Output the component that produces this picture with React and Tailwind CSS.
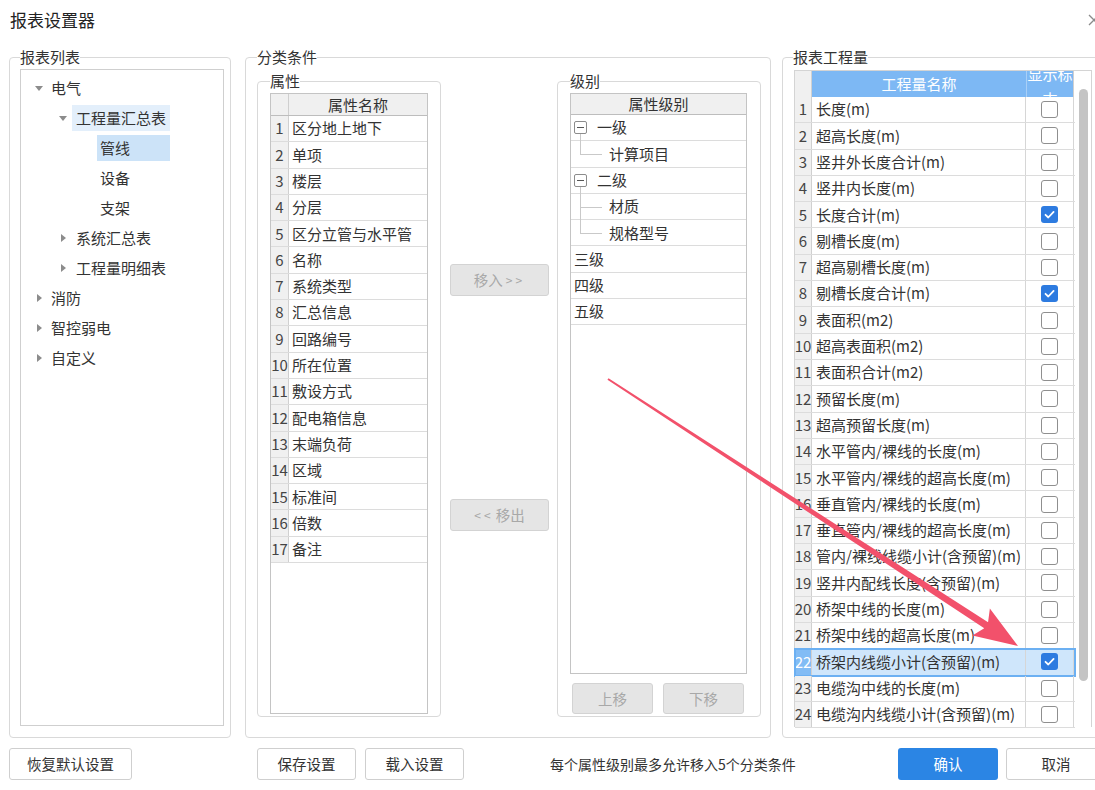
import React from 'react';

const attrs = [
  '区分地上地下', '单项', '楼层', '分层', '区分立管与水平管', '名称', '系统类型', '汇总信息',
  '回路编号', '所在位置', '敷设方式', '配电箱信息', '末端负荷', '区域', '标准间', '倍数', '备注',
];

const levels = [
  { t: '一级', type: 'parent' },
  { t: '计算项目', type: 'child', last: true },
  { t: '二级', type: 'parent' },
  { t: '材质', type: 'child' },
  { t: '规格型号', type: 'child', last: true },
  { t: '三级', type: 'leaf' },
  { t: '四级', type: 'leaf' },
  { t: '五级', type: 'leaf' },
];

const qty = [
  ['长度(m)', false],
  ['超高长度(m)', false],
  ['竖井外长度合计(m)', false],
  ['竖井内长度(m)', false],
  ['长度合计(m)', true],
  ['剔槽长度(m)', false],
  ['超高剔槽长度(m)', false],
  ['剔槽长度合计(m)', true],
  ['表面积(m2)', false],
  ['超高表面积(m2)', false],
  ['表面积合计(m2)', false],
  ['预留长度(m)', false],
  ['超高预留长度(m)', false],
  ['水平管内/裸线的长度(m)', false],
  ['水平管内/裸线的超高长度(m)', false],
  ['垂直管内/裸线的长度(m)', false],
  ['垂直管内/裸线的超高长度(m)', false],
  ['管内/裸线线缆小计(含预留)(m)', false],
  ['竖井内配线长度(含预留)(m)', false],
  ['桥架中线的长度(m)', false],
  ['桥架中线的超高长度(m)', false],
  ['桥架内线缆小计(含预留)(m)', true],
  ['电缆沟中线的长度(m)', false],
  ['电缆沟内线缆小计(含预留)(m)', false],
];

function Tri({ open }) {
  return open ? (
    <svg width="8" height="5" viewBox="0 0 8 5"><path d="M0 0h8L4 5z" fill="#8c8c8c" /></svg>
  ) : (
    <svg width="5" height="8" viewBox="0 0 5 8"><path d="M0 0v8l5-4z" fill="#8c8c8c" /></svg>
  );
}

function Group({ title, legend, className, children }) {
  return (
    <fieldset className={`min-w-0 shrink-0 border border-[#d9d9d9] rounded-[4px] ${className}`}>
      <legend className={`px-0 text-[15px] leading-[20px] text-[#333] ${legend}`}>{title}</legend>
      {children}
    </fieldset>
  );
}

function Check({ on }) {
  if (on) {
    return (
      <span className="w-[17px] h-[17px] rounded-[3px] bg-[#2d7be0] flex items-center justify-center">
        <svg width="13" height="13" viewBox="0 0 13 13">
          <path d="M2.5 6.8l2.8 2.7 5.3-5.6" fill="none" stroke="#fff" strokeWidth="1.8" strokeLinecap="round" strokeLinejoin="round" />
        </svg>
      </span>
    );
  }
  return <span className="w-[17px] h-[17px] rounded-[3px] border border-[#8f8f8f] bg-white" />;
}

function Tree() {
  const row = 'h-[26px] flex items-center text-[15px] leading-[20px] whitespace-nowrap';
  return (
    <div className="ml-[10px] mt-[2px] w-[204px] h-[657px] border border-[#cfcfcf] pt-[5px] flex flex-col gap-[4px]">
      <div className={`${row} pl-[13px]`}>
        <span className="w-[10px] flex justify-center"><Tri open /></span>
        <span className="ml-[7px]">电气</span>
      </div>
      <div className={`${row} pl-[37px]`}>
        <span className="w-[10px] flex justify-center"><Tri open /></span>
        <span className="ml-[4px] h-[26px] w-[98px] px-[4px] flex items-center bg-[#e3effb]">工程量汇总表</span>
      </div>
      <div className={`${row} pl-[76px]`}>
        <span className="h-[26px] w-[73px] px-[3px] flex items-center bg-[#cce3f8]">管线</span>
      </div>
      <div className={`${row} pl-[79px]`}>设备</div>
      <div className={`${row} pl-[79px]`}>支架</div>
      <div className={`${row} pl-[37px]`}>
        <span className="w-[10px] flex justify-center"><Tri /></span>
        <span className="ml-[8px]">系统汇总表</span>
      </div>
      <div className={`${row} pl-[37px]`}>
        <span className="w-[10px] flex justify-center"><Tri /></span>
        <span className="ml-[8px]">工程量明细表</span>
      </div>
      {['消防', '智控弱电', '自定义'].map((t) => (
        <div key={t} className={`${row} pl-[13px]`}>
          <span className="w-[10px] flex justify-center"><Tri /></span>
          <span className="ml-[7px]">{t}</span>
        </div>
      ))}
    </div>
  );
}

function AttrTable() {
  return (
    <div className="ml-[12px] mt-[2px] w-[158px] h-[621px] border border-[#c4c4c4] overflow-hidden">
      <div className="flex h-[22px] bg-[#f0f0f0] border-b border-[#bdbdbd]">
        <div className="w-[18px] border-r border-[#cfcfcf]" />
        <div className="flex-1 text-center text-[15px] leading-[21px]">属性名称</div>
      </div>
      {attrs.map((a, i) => (
        <div key={a} className="flex h-[26.3px] border-b border-[#dcdcdc]">
          <div className="w-[18px] shrink-0 bg-[#f0f0f0] border-r border-[#d0d0d0] flex items-center justify-center text-[15px] text-[#444] whitespace-nowrap">
            {i + 1}
          </div>
          <div className="flex-1 pl-[3px] flex items-center text-[15px] whitespace-nowrap">{a}</div>
        </div>
      ))}
    </div>
  );
}

function LevelTable() {
  return (
    <div className="ml-[12px] mt-[2px] w-[177px] h-[581px] border border-[#c4c4c4] overflow-hidden">
      <div className="h-[21px] bg-[#f0f0f0] border-b border-[#bdbdbd] text-center text-[15px] leading-[20px]">属性级别</div>
      {levels.map((l) => (
        <div key={l.t} className="relative h-[26.3px] border-b border-[#dcdcdc] flex items-center text-[15px] whitespace-nowrap">
          {l.type === 'parent' && (
            <>
              <span className="absolute left-[3px] top-[6px] w-[13px] h-[13px] border border-[#8c8c8c] rounded-[2px] bg-white flex items-center justify-center">
                <span className="w-[7px] h-px bg-[#555]" />
              </span>
              <span className="absolute left-[9px] top-[19px] bottom-[-1px] w-px bg-[#c9c9c9]" />
            </>
          )}
          {l.type === 'child' && (
            <>
              <span className={`absolute left-[9px] top-0 w-px bg-[#c9c9c9] ${l.last ? 'h-1/2' : 'bottom-[-1px]'}`} />
              <span className="absolute left-[9px] top-1/2 w-[22px] h-px bg-[#c9c9c9]" />
            </>
          )}
          <span className={l.type === 'parent' ? 'pl-[26px]' : l.type === 'child' ? 'pl-[38px]' : 'pl-[3px]'}>{l.t}</span>
        </div>
      ))}
    </div>
  );
}

function QtyTable() {
  return (
    <div className="ml-[11px] mt-[3px] w-[298px] h-[657px] border-l border-t border-r border-[#d4d4d4] flex">
      <div className="w-[280px] shrink-0 flex flex-col">
        <div className="flex h-[26px] shrink-0">
          <div className="w-[17px] bg-[#f0f0f0] border-r border-[#d0d0d0]" />
          <div className="w-[214px] bg-[#7db8f4] text-white text-center text-[15px] leading-[26px]">工程量名称</div>
          <div className="w-[48px] bg-[#7db8f4] border-l border-[#a8cff7] border-r border-r-[#d0d0d0] overflow-hidden">
            <div className="-mt-[10px] text-white text-center text-[15px] leading-[25px]">显示标志</div>
          </div>
        </div>
        {qty.map(([name, on], i) => {
          const sel = i === 21;
          return (
            <div
              key={name}
              className={`flex h-[26.3px] shrink-0 border-b border-[#dcdcdc] ${sel ? 'outline-2 outline-[#6cb0f2] -outline-offset-1' : ''}`}
            >
              <div
                className={`w-[17px] shrink-0 border-r border-[#d0d0d0] flex items-center justify-center text-[15px] whitespace-nowrap ${
                  sel ? 'bg-[#82bcf5] text-white' : 'bg-[#f0f0f0] text-[#444]'
                }`}
              >
                {i + 1}
              </div>
              <div className={`w-[214px] shrink-0 pl-[4px] border-r border-[#d6d6d6] flex items-center text-[15px] whitespace-nowrap overflow-hidden ${sel ? 'bg-[#cfe6fb]' : ''}`}>
                {name}
              </div>
              <div className={`w-[48px] shrink-0 border-r border-[#d6d6d6] flex items-center justify-center ${sel ? 'bg-[#cfe6fb]' : ''}`}>
                <Check on={on} />
              </div>
            </div>
          );
        })}
      </div>
      <div className="flex-1 pt-[18px] pl-[4px]">
        <div className="w-[9px] h-[592px] rounded-full bg-[#c4c4c4]" />
      </div>
    </div>
  );
}

const btn = 'h-[32px] shrink-0 rounded-[3px] border border-[#cfcfcf] bg-white text-[14.5px] text-[#333] flex items-center justify-center';
const dis = 'shrink-0 rounded-[3px] border border-[#d3d3d3] bg-[#e5e5e5] text-[14.5px] text-[#a8a8a8] flex items-center justify-center';

export default function App() {
  return (
    <div className="relative w-[1095px] h-[790px] overflow-hidden bg-white text-[#333] font-['Noto_Sans_CJK_SC','Noto_Sans',sans-serif]">
      <div className="h-[47px] pt-[9px] pl-[10px] flex items-start">
        <span className="text-[17px] leading-[22px] text-[#222]">报表设置器</span>
        <svg className="ml-auto -mr-[5px] mt-[5px]" width="12" height="12" viewBox="0 0 12 12">
          <path d="M1 1l10 10M11 1L1 11" stroke="#8a8a8a" strokeWidth="1.3" />
        </svg>
      </div>

      <div className="flex h-[691px] pl-[9px]">
        <Group title="报表列表" legend="ml-[10px]" className="w-[222px] h-[691px]">
          <Tree />
        </Group>

        <Group title="分类条件" legend="ml-[11px]" className="ml-[14px] w-[526px] h-[691px]">
          <div className="flex mt-[4px] pl-[11px]">
            <Group title="属性" legend="ml-[12px]" className="w-[184px] h-[646px]">
              <AttrTable />
            </Group>
            <div className="ml-[9px] w-[99px] shrink-0 flex flex-col">
              <div className={`${dis} mt-[193px] h-[32px]`}>
                移入<span className="ml-[3px] text-[12px] tracking-[3px]">&gt;&gt;</span>
              </div>
              <div className={`${dis} mt-[203px] h-[32px]`}>
                <span className="mr-[2px] text-[12px] tracking-[3px]">&lt;&lt;</span>移出
              </div>
            </div>
            <Group title="级别" legend="ml-[12px]" className="ml-[8px] w-[204px] h-[646px]">
              <LevelTable />
              <div className="flex mt-[9px] ml-[14px] gap-[10px]">
                <div className={`${dis} w-[81px] h-[31px]`}>上移</div>
                <div className={`${dis} w-[81px] h-[31px]`}>下移</div>
              </div>
            </Group>
          </div>
        </Group>

        <Group title="报表工程量" legend="ml-[10px]" className="ml-[11px] w-[320px] h-[691px]">
          <QtyTable />
        </Group>
      </div>

      <div className="flex items-center h-[32px] mt-[10px] pl-[9px]">
        <div className={`${btn} w-[123px]`}>恢复默认设置</div>
        <div className={`${btn} ml-[125px] w-[99px]`}>保存设置</div>
        <div className={`${btn} ml-[9px] w-[99px]`}>载入设置</div>
        <span className="ml-[86px] w-[348px] shrink-0 text-[14px] text-[#333] whitespace-nowrap">每个属性级别最多允许移入5个分类条件</span>
        <div className="h-[32px] w-[100px] shrink-0 rounded-[3px] bg-[#2b85e4] text-white text-[14.5px] flex items-center justify-center">确认</div>
        <div className={`${btn} ml-[8px] w-[100px]`}>取消</div>
      </div>

      <svg className="absolute inset-0 pointer-events-none" width="1095" height="790" viewBox="0 0 1095 790">
        <polygon
          points="607.45,379.84 984.25,628.18 972.39,635.39 1018,646 989.87,608.57 988.07,622.32 608.55,378.16"
          fill="#f2516b"
        />
      </svg>
    </div>
  );
}
